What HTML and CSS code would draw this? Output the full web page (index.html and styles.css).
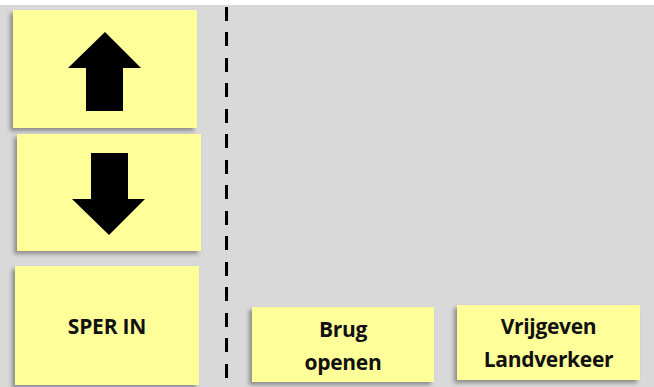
FILE: index.html
```html
<!DOCTYPE html>
<html lang="nl">
<head>
  <meta charset="UTF-8" />
  <meta name="viewport" content="width=device-width, initial-scale=1.0"/>
  <title>Brugbediening</title>
  <link rel="stylesheet" href="styles.css">
</head>
<body>
  <div class="screen">
    <div class="side">
      <button class="knop knop-op" aria-label="Omhoog">
        <svg width="74" height="80" viewBox="0 0 74 80">
          <polygon points="37,0 73,36 55,36 55,79 18,79 18,36 0,36" fill="#000"/>
        </svg>
      </button>
      <button class="knop knop-neer" aria-label="Omlaag">
        <svg width="74" height="82" viewBox="0 0 74 82">
          <polygon points="19,0 56,0 56,46 73,46 37,82 0,46 19,46" fill="#000"/>
        </svg>
      </button>
      <button class="knop knop-sper">SPER IN</button>
    </div>

    <!-- scheidingslijn tussen bediening en vrij veld -->
    <div class="lijn"></div>

    <div class="veld">
      <button class="knop knop-brug">Brug<br>openen</button>
      <button class="knop knop-vrij">Vrijgeven<br>Landverkeer</button>
    </div>
  </div>
</body>
</html>
```

FILE: styles.css
```css
body {
  margin: 0;
  background: #fff;
  font-family: "Open Sans", "Liberation Sans", sans-serif;
}
.screen {
  margin-top: 5px;
  height: 382px;
  background: #d9d9d9;
  display: flex;
  overflow: hidden;
}
.side {
  width: 225px;
  display: flex;
  flex-direction: column;
  padding-top: 5px;
}
.knop {
  background: #ffff99;
  border: none;
  padding: 0;
  box-shadow: -3px 3px 4px rgba(0,0,0,0.35);
  display: flex;
  align-items: center;
  justify-content: center;
  font-family: "Open Sans", "Liberation Sans", sans-serif;
  font-weight: bold;
  color: #111;
  cursor: pointer;
}
.knop-op {
  width: 184px;
  height: 118px;
  margin-left: 13px;
  padding-top: 5px;
}
.knop-neer {
  width: 184px;
  height: 117px;
  margin-left: 17px;
  margin-top: 6px;
  padding-top: 2px;
}
.knop-sper {
  width: 184px;
  height: 119px;
  margin-left: 15px;
  margin-top: 15px;
  font-size: 21px;
  letter-spacing: -0.2px;
}
.lijn {
  width: 3px;
  margin-top: 2px;
  background: repeating-linear-gradient(to bottom, #000 0, #000 14px, transparent 14px, transparent 25.5px);
}
.veld {
  flex: 1;
  display: flex;
  align-items: flex-end;
}
.knop-brug,
.knop-vrij {
  height: 75px;
  width: 182px;
  font-size: 21px;
  line-height: 33px;
  letter-spacing: -0.3px;
  text-align: center;
}
.knop-brug {
  margin-left: 24px;
  margin-bottom: 5px;
  padding-top: 3px;
}
.knop-vrij {
  width: 183px;
  margin-left: 23px;
  margin-bottom: 7px;
  padding-top: 1px;
}
```
